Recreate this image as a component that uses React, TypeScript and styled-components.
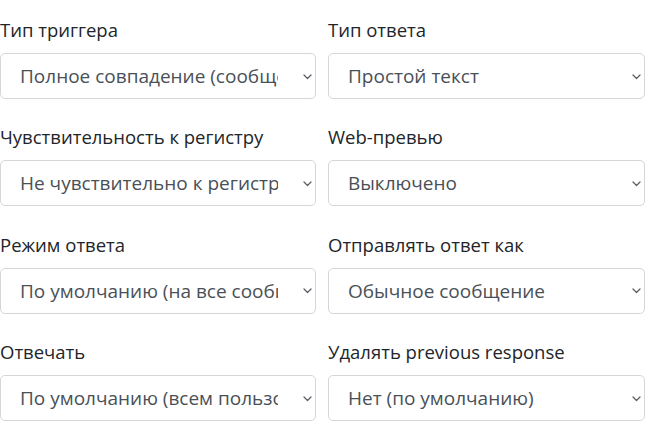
import React from "react";
import styled, { createGlobalStyle } from "styled-components";

const GlobalStyle = createGlobalStyle`
  html, body { margin: 0; padding: 0; background: #ffffff; }
  body {
    font-family: "Open Sans", "Noto Sans", "DejaVu Sans", sans-serif;
    color: #212529;
    overflow: hidden;
  }
`;

const Form = styled.div`
  display: grid;
  grid-template-columns: 316px 317px;
  column-gap: 12px;
  row-gap: 24.4px;
  padding-top: 16px;
`;

const Field = styled.div`
  display: flex;
  flex-direction: column;
  min-width: 0;
`;

const Label = styled.label`
  font-size: 18.5px;
  line-height: 27px;
  margin-bottom: 10px;
  white-space: nowrap;
  color: #212529;
`;

const SelectBox = styled.div`
  display: flex;
  align-items: center;
  height: 46px;
  box-sizing: border-box;
  border: 1px solid #d6d6d6;
  border-radius: 5px;
  padding: 0 3px 0 19px;
  background: #fff;
  font-size: 19px;
  color: #495057;
`;

const Value = styled.span`
  flex: 1;
  min-width: 0;
  overflow: hidden;
  white-space: nowrap;
  margin-right: 25px;
`;

const Chevron = styled.svg`
  width: 9px;
  height: 6px;
  flex: none;
  margin-top: 1px;
`;

const fields = [
  ["Тип триггера", "Полное совпадение (сообщение целиком)"],
  ["Тип ответа", "Простой текст"],
  ["Чувствительность к регистру", "Не чувствительно к регистру"],
  ["Web-превью", "Выключено"],
  ["Режим ответа", "По умолчанию (на все сообщения)"],
  ["Отправлять ответ как", "Обычное сообщение"],
  ["Отвечать", "По умолчанию (всем пользователям)"],
  ["Удалять previous response", "Нет (по умолчанию)"],
];

export default function App() {
  return (
    <>
      <GlobalStyle />
      <Form>
        {fields.map(([label, value]) => (
          <Field key={label}>
            <Label>{label}</Label>
            <SelectBox role="combobox">
              <Value>{value}</Value>
              <Chevron viewBox="0 0 9 6">
                <path d="M1 1 L4.5 4.5 L8 1" fill="none" stroke="#5a5f66" strokeWidth="1.3" strokeLinecap="round" strokeLinejoin="round" />
              </Chevron>
            </SelectBox>
          </Field>
        ))}
      </Form>
    </>
  );
}
